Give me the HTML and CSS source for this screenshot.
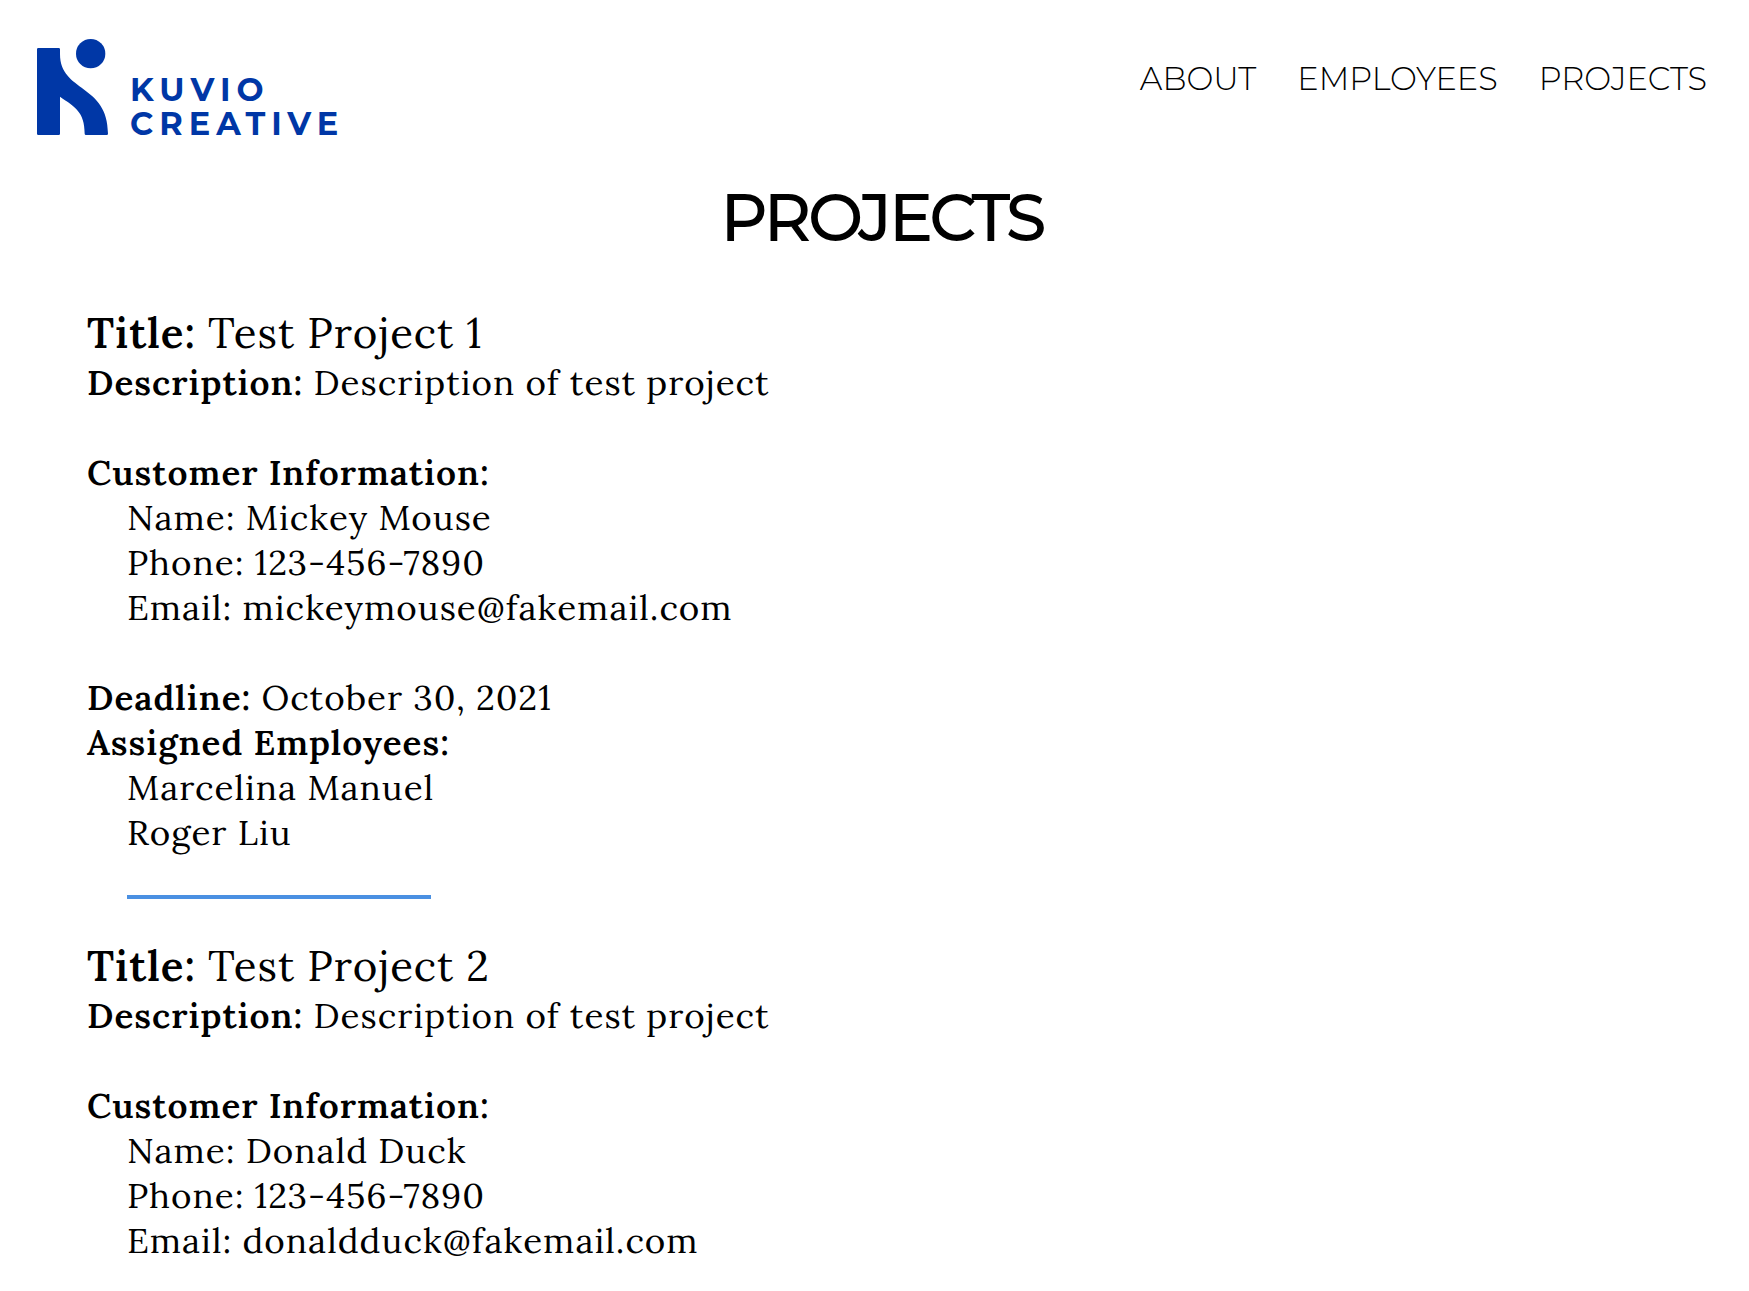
FILE: index.html
```html
<!DOCTYPE html>
<html lang="en">
<head>
<meta charset="utf-8">
<meta name="viewport" content="width=device-width, initial-scale=1">
<title>Projects - Kuvio Creative</title>
<link rel="stylesheet" href="styles.css">
</head>
<body>
<header class="site-header">
  <a class="brand" href="#">
    <svg class="brand-mark" viewBox="0 0 213 288" aria-hidden="true">
      <circle cx="161" cy="44" r="44"/>
      <path d="M4 27H65Q69 27 69 31V45C69 160 213 134 213 284Q213 288 209 288H147Q143 288 143 284C143 218 114 204 69 173V284Q69 288 65 288H4Q0 288 0 284V31Q0 27 4 27Z"/>
    </svg>
    <span class="brand-name"><span>KUVIO</span><span>CREATIVE</span></span>
  </a>
  <nav class="site-nav">
    <a href="#">ABOUT</a>
    <a href="#">EMPLOYEES</a>
    <a href="#">PROJECTS</a>
  </nav>
</header>
<main>
  <h1 class="page-title">PROJECTS</h1>
  <article class="project">
    <h2 class="project-title"><strong>Title:</strong> Test Project 1</h2>
    <p><strong>Description:</strong> Description of test project</p>
    <section class="customer">
      <h3>Customer Information:</h3>
      <ul>
        <li>Name: Mickey Mouse</li>
        <li>Phone: 123-456-7890</li>
        <li>Email: mickeymouse@fakemail.com</li>
      </ul>
    </section>
    <p><strong>Deadline:</strong> October 30, 2021</p>
    <h3>Assigned Employees:</h3>
    <ul>
      <li>Marcelina Manuel</li>
      <li>Roger Liu</li>
    </ul>
  </article>
  <hr class="divider">
  <article class="project">
    <h2 class="project-title"><strong>Title:</strong> Test Project 2</h2>
    <p><strong>Description:</strong> Description of test project</p>
    <section class="customer last">
      <h3>Customer Information:</h3>
      <ul>
        <li>Name: Donald Duck</li>
        <li>Phone: 123-456-7890</li>
        <li>Email: donaldduck@fakemail.com</li>
      </ul>
    </section>
  </article>
</main>
</body>
</html>
```

FILE: styles.css
```css
* {
  box-sizing: border-box;
}

body {
  margin: 0;
  background: #fff;
  color: #000;
  font: 35px/45px Lora, "Liberation Serif", serif;
  letter-spacing: 1px;
}

h1, h2, h3, p, ul {
  margin: 0;
  padding: 0;
  font-size: inherit;
}

h3, strong {
  font-weight: 650;
}

.site-header {
  display: flex;
  justify-content: space-between;
  align-items: flex-start;
  padding: 39px 42px 0 37px;
}

.brand {
  display: flex;
  align-items: flex-end;
  gap: 22px;
  color: #0037a6;
  text-decoration: none;
}

.brand-mark {
  display: block;
  width: 71px;
  height: 96px;
  fill: currentColor;
}

.brand-name {
  display: flex;
  flex-direction: column;
  font: 700 32px/34px Montserrat, Lato, sans-serif;
  letter-spacing: 6px;
  margin-bottom: -6px;
}

.site-nav {
  display: flex;
  gap: 41px;
  padding-top: 20px;
  font: 300 32px/40px Montserrat, Inter, sans-serif;
  letter-spacing: 0;
}

.site-nav a {
  color: inherit;
  text-decoration: none;
}

.page-title {
  padding: 42px 0 49px 16px;
  font: 400 64px/80px Montserrat, Inter, sans-serif;
  letter-spacing: -2px;
  text-align: center;
  -webkit-text-stroke: 2px currentColor;
}

.project {
  padding: 0 87px;
}

.project-title {
  font-size: 42px;
  font-weight: 400;
  line-height: 54px;
}

.project ul {
  padding-left: 40px;
  list-style: none;
}

.customer {
  padding: 45px 0;
}

.customer.last {
  padding-bottom: 0;
}

.divider {
  width: 304px;
  height: 4px;
  margin: 40px 0 40px 127px;
  border: 0;
  background: #4a90e2;
}
```
